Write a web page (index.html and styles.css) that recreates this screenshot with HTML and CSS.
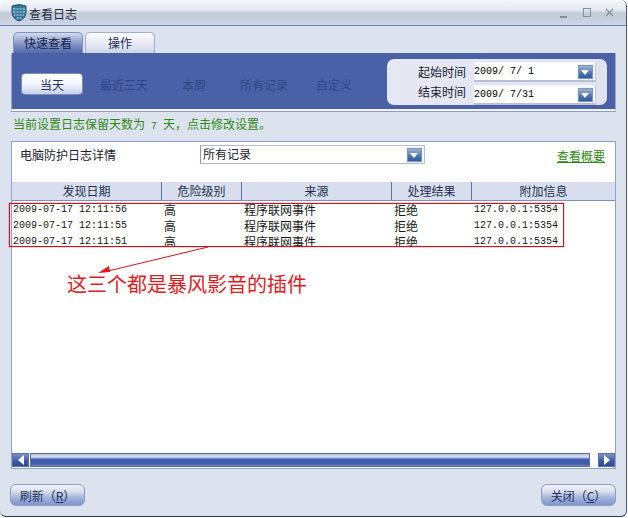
FILE: index.html
```html
<!DOCTYPE html>
<html lang="zh">
<head>
<meta charset="utf-8">
<title>查看日志</title>
<link rel="stylesheet" href="styles.css">
</head>
<body>
<div class="window">
  <header class="titlebar">
    <svg class="logo" width="16" height="18" viewBox="0 0 16 18"><path d="M1 2 Q8 -1 15 2 L15 9 Q14 15 8 17 Q2 15 1 9 Z" fill="#3f7f9f" stroke="#1f4f76"/><path d="M2 5h12M2 8h12M3 11h10M5 14h6" stroke="#bfe3ee" stroke-width="1.2"/><path d="M5 1v14M8 1v16M11 1v14" stroke="#1d5a80" stroke-width=".8"/></svg>
    <span class="title">查看日志</span>
    <div class="controls">
      <svg width="60" height="12" viewBox="0 0 60 12"><path d="M0 10h7" stroke="#7f8fa6" stroke-width="2"/><rect x="23.5" y="1.5" width="7" height="8" fill="none" stroke="#7f8fa6"/><path d="M46 2l7 7M53 2l-7 7" stroke="#7f8fa6" stroke-width="1.3"/></svg>
    </div>
  </header>

  <nav class="tabs">
    <div class="tab active">快速查看</div>
    <div class="tab">操作</div>
  </nav>

  <section class="band">
    <div class="ranges">
      <div class="range current">当天</div>
      <div class="range r2">最近三天</div>
      <div class="range r3">本周</div>
      <div class="range r4">所有记录</div>
      <div class="range r5">自定义</div>
    </div>
    <div class="dates">
      <div class="date-row">
        <span class="date-label">起始时间</span>
        <div class="date-input"><span>2009/ 7/ 1</span><i class="arrow-btn"></i></div>
      </div>
      <div class="date-row">
        <span class="date-label lifted">结束时间</span>
        <div class="date-input"><span>2009/ 7/31</span><i class="arrow-btn"></i></div>
      </div>
    </div>
  </section>

  <p class="notice">当前设置日志保留天数为<span class="mono"> 7 </span>天，点击修改设置。</p>

  <section class="panel">
    <div class="filter">
      <span class="filter-label">电脑防护日志详情</span>
      <div class="select"><span>所有记录</span><i class="arrow-btn"></i></div>
      <a class="link" href="#">查看概要</a>
    </div>
    <div class="thead">
      <div>发现日期</div><div>危险级别</div><div>来源</div><div>处理结果</div><div>附加信息</div>
    </div>
    <div class="tbody">
      <div class="row"><span class="mono">2009-07-17 12:11:56</span><span>高</span><span>程序联网事件</span><span>拒绝</span><span class="mono">127.0.0.1:5354</span></div>
      <div class="row"><span class="mono">2009-07-17 12:11:55</span><span>高</span><span>程序联网事件</span><span>拒绝</span><span class="mono">127.0.0.1:5354</span></div>
      <div class="row clipped"><span class="mono">2009-07-17 12:11:51</span><span>高</span><span>程序联网事件</span><span>拒绝</span><span class="mono">127.0.0.1:5354</span></div>
    </div>
    <div class="hscroll">
      <div class="sbtn"><i class="tri left"></i></div>
      <div class="strack"></div>
      <div class="sbtn"><i class="tri right"></i></div>
    </div>
  </section>

  <footer class="actions">
    <button class="btn">刷新（<u>R</u>）</button>
    <button class="btn">关闭（<u>C</u>）</button>
  </footer>

  <div class="redbox"></div>
  <svg class="pointer" width="130" height="40" viewBox="0 0 130 40"><path d="M112 2 L12 26" stroke="#c8181c" stroke-width="1"/><path d="M2 28 L13 21 L14 27 Z" fill="#e8141c"/></svg>
  <div class="note">这三个都是暴风影音的插件</div>
</div>
</body>
</html>
```
FILE: styles.css
```css
* { box-sizing: border-box; }
html, body { margin: 0; padding: 0; background: #fff; }
body {
  width: 628px;
  height: 518px;
  overflow: hidden;
  font-family: "Noto Sans CJK SC", "Liberation Sans", sans-serif;
  font-size: 12px;
  color: #1c2a44;
}
.window {
  position: relative;
  width: 627px;
  height: 517px;
  background: #dde2ef;
  border-right: 1px solid #4a5a7a;
  border-bottom: 1px solid #2c3a58;
  border-radius: 6px;
  overflow: hidden;
  display: flex;
  flex-direction: column;
}
.titlebar {
  height: 26px;
  flex: none;
  display: flex;
  align-items: center;
  padding: 1px 0 0 11px;
  background: linear-gradient(#f6f7fa 0, #e6e9f0 40%, #c2cbd9 52%, #ced5e2 100%);
  border-bottom: 1px solid #6f83bb;
}
.logo { flex: none; margin-right: 2px; }
.title { font-size: 12px; color: #20283c; }
.controls { margin-left: auto; display: flex; margin-right: 6px; }
.tabs { display: flex; gap: 2px; height: 21px; margin: 6px 0 0 13px; flex: none; }
.tab {
  width: 70px;
  height: 21px;
  line-height: 20px;
  text-align: center;
  border: 1px solid #9fb0d2;
  border-bottom: 0;
  border-radius: 5px 5px 0 0;
  background: linear-gradient(#fdfdfe, #dfe3f1 70%, #cdd3e6);
  color: #1d2c54;
}
.tab.active { background: linear-gradient(#d5dbea, #7d8fc4 60%, #5568a8); color: #14224a; border-color: #7f92c4; }
.band {
  flex: none;
  height: 58px;
  margin-left: 11px;
  width: 605px;
  background: #4a61a8;
  border: 1px solid #97a6cc;
  border-top: 0;
  border-bottom: 2px solid #f2f4fa;
  display: flex;
  justify-content: space-between;
  align-items: flex-start;
  box-shadow: 0 1px 0 #8f9dc4;
}
.ranges { display: flex; align-items: center; height: 22px; margin: 20px 0 0 9px; color: #2f4586; }
.range { flex: none; white-space: nowrap; }
.current {
  width: 62px;
  height: 22px;
  line-height: 21px;
  text-align: center;
  background: linear-gradient(#fff, #f4f6fc 50%, #c8d0ea);
  border: 1px solid #7d8dbc;
  border-radius: 4px;
  color: #26345c;
}
.r2 { margin-left: 17px; }
.r3 { margin-left: 34px; }
.r4 { margin-left: 34px; }
.r5 { margin-left: 28px; }
.dates {
  width: 220px;
  height: 46px;
  margin: 6px 8px 0 0;
  background: linear-gradient(90deg, #e6e9f4, #dfe3f0);
  border-radius: 7px;
  padding: 3px 0 0 0;
  display: flex;
  flex-direction: column;
  gap: 3px;
}
.date-row { display: flex; align-items: center; height: 20px; }
.date-label { width: 79px; text-align: right; color: #1a2030; margin-bottom: 1px; }
.date-label.lifted { margin-bottom: 7px; }
.date-input {
  margin-left: 8px;
  width: 122px;
  height: 20px;
  background: #fff;
  border-right: 1px solid #c0c6d8;
  border-bottom: 2px solid #b8bfd2;
  border-top: 1px solid #f4f5fa;
  display: flex;
  align-items: center;
  justify-content: space-between;
  padding-right: 1px;
  font-family: "Liberation Mono", monospace;
  font-size: 10px;
  color: #000;
  white-space: pre;
}
.arrow-btn {
  position: relative;
  display: block;
  width: 17px;
  height: 16px;
  flex: none;
  background: linear-gradient(#a6b8d6, #3d6aa8 70%, #2d5a9c);
  border: 1px solid #eef1f8;
  box-shadow: 0 0 0 1px #7f95bd inset;
}
.arrow-btn::after {
  content: "";
  position: absolute;
  left: 3px;
  top: 5px;
  border-style: solid;
  border-width: 5px 4.5px 0;
  border-color: #fff transparent transparent;
}
.notice { flex: none; margin: 4px 0 0 13px; height: 17px; line-height: 17px; color: #2f8a12; white-space: pre; }
.panel {
  flex: none;
  margin: 9px 0 0 11px;
  width: 605px;
  height: 328px;
  background: #fff;
  border: 1px solid #90a0cb;
  display: flex;
  flex-direction: column;
}
.filter { flex: none; height: 40px; display: flex; align-items: flex-start; padding-top: 3px; position: relative; }
.filter-label { margin: 1px 0 0 8px; width: 180px; color: #1a2030; }
.select {
  width: 225px;
  height: 19px;
  border: 1px solid #b4bed6;
  border-left-color: #8a97b8;
  display: flex;
  align-items: center;
  justify-content: space-between;
  padding: 0 1px 2px 2px;
  color: #1a2030;
  line-height: 16px;
}
.select .arrow-btn { margin-top: 2px; }
.link { margin: 2px 10px 0 auto; color: #2f8a12; text-decoration: underline; }
.thead {
  flex: none;
  height: 19px;
  display: grid;
  grid-template-columns: 150px 80px 150px 80px 1fr;
  background: #d8deee;
  border-bottom: 1px solid #7f90bc;
  line-height: 18px;
  text-align: center;
  color: #24304e;
}
.thead > div { border-right: 1px solid #5a70a8; }
.thead > div:last-child { border-right: 0; }
.tbody { flex: 1; padding-top: 1px; min-height: 0; overflow: hidden; }
.row {
  display: grid;
  grid-template-columns: 151px 80px 150px 80px 1fr;
  height: 16px;
  line-height: 16px;
  padding-left: 1px;
  color: #151515;
  white-space: nowrap;
}
.row.clipped { height: 13px; overflow: hidden; }
.mono { font-family: "Liberation Mono", monospace; font-size: 10px; }
.hscroll { flex: none; height: 14px; display: flex; margin-bottom: 1px; }
.sbtn {
  width: 17px;
  background: linear-gradient(#7c93c6, #3c58a8 60%, #2d4a9a);
  border: 1px solid #5c70a4;
  display: flex;
  align-items: center;
  justify-content: center;
  flex: none;
}
.strack {
  flex: none;
  width: 560px;
  margin: 0 8px 0 1px;
  background: linear-gradient(#b6c1dc, #d9dfec 25%, #3f5cae 45%, #3f5cae 80%, #6d84bf);
  border: 1px solid #5c70a4;
}
.tri { display: block; border-style: solid; }
.tri.left { border-width: 5px 6px 5px 0; border-color: transparent #fff transparent transparent; }
.tri.right { border-width: 5px 0 5px 6px; border-color: transparent transparent transparent #fff; }
.actions { flex: none; display: flex; justify-content: space-between; margin: 15px 0 0 10px; width: 606px; }
.btn {
  width: 75px;
  height: 22px;
  padding: 0;
  border: 1px solid #8d9cc4;
  border-radius: 6px;
  background: linear-gradient(#f3f5fa, #d6dcee 35%, #a8b7dc 60%, #7f94cd);
  color: #22305a;
  font: inherit;
}
.redbox {
  position: absolute;
  left: 9px;
  top: 203px;
  width: 555px;
  height: 44px;
  border: 1px solid #c4161c;
  box-shadow: 0 0 0 .5px rgba(196,22,28,.35);
  pointer-events: none;
}
.pointer { position: absolute; left: 96px; top: 245px; }
.note {
  position: absolute;
  left: 67px;
  top: 271px;
  font-size: 20px;
  line-height: 26px;
  color: #e01b1f;
  white-space: nowrap;
}
```
